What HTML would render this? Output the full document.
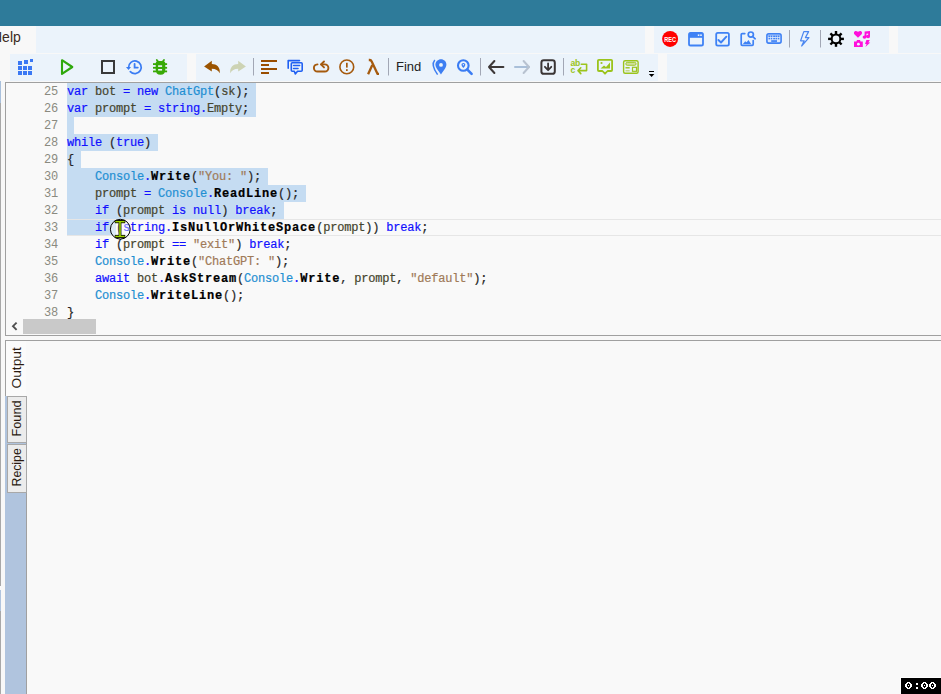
<!DOCTYPE html>
<html><head><meta charset="utf-8">
<style>
*{margin:0;padding:0;box-sizing:border-box}
html,body{width:941px;height:694px;overflow:hidden;background:#f8f8f8;position:relative;font-family:"Liberation Sans",sans-serif}
.a{position:absolute}
.lb{background:#ebf3fb}
#code{position:absolute;left:6px;top:83px;width:935px;height:252px;background:#f9f9f9;overflow:hidden}
.ln{position:absolute;left:0;width:52px;margin-top:1px;text-align:right;font-family:"Liberation Mono",monospace;font-size:12px;color:#8a8a80;letter-spacing:-0.2px;height:17px;line-height:17px}
.cl{position:absolute;left:61px;height:17px;line-height:17px;margin-top:1px;font-family:"Liberation Mono",monospace;font-size:12px;letter-spacing:-0.2px;white-space:pre;color:#45452e;-webkit-text-stroke:0.2px currentColor}
.sel{position:absolute;left:61px;height:17px;background:#c5dcf2}
.k{color:#1010ff}.t{color:#1f8fd2}.s{color:#a07a58}.p{color:#262626}
.b{font-weight:bold;color:#000;letter-spacing:0.8px}
.ui{font-family:"Liberation Sans",sans-serif;font-size:13px;color:#222}
</style></head><body>
<!-- title bar -->
<div class="a" style="left:0;top:0;width:941px;height:26px;background:#2e7b9a"></div>
<!-- menu row groups -->
<div class="a lb" style="left:36px;top:26px;width:609px;height:27px"></div>
<div class="a lb" style="left:654px;top:26px;width:235px;height:27px"></div>
<div class="a lb" style="left:898px;top:26px;width:43px;height:27px"></div>
<div class="a ui" style="left:-8px;top:29px;font-size:14px;color:#3a2a20">Help</div>
<!-- toolbar groups -->
<div class="a lb" style="left:10px;top:54px;width:177px;height:27px"></div>
<div class="a lb" style="left:196px;top:54px;width:462px;height:27px"></div>
<div class="a lb" style="left:667px;top:54px;width:274px;height:27px"></div>
<div class="a ui" style="left:396px;top:59px;font-size:13px">Find</div>


<svg class="a" style="left:0;top:0" width="941" height="90" viewBox="0 0 941 90">
<!-- grid icon -->
<g fill="#3a78f4">
<rect x="18" y="61" width="4" height="4"/><rect x="24" y="60" width="4" height="4"/><rect x="30" y="59" width="3" height="3"/>
<rect x="18" y="66" width="4" height="4"/><rect x="23" y="66" width="4" height="4"/><rect x="28" y="66" width="4" height="4"/>
<rect x="18" y="71" width="4" height="4"/><rect x="23" y="71" width="4" height="4"/><rect x="28" y="71" width="4" height="4"/>
</g>
<!-- play -->
<path d="M62,60.2 L72.3,67 L62,73.8 Z" fill="none" stroke="#2fa80c" stroke-width="2.1" stroke-linejoin="round"/>
<!-- stop -->
<rect x="102" y="61" width="12" height="12" fill="none" stroke="#3a3a3a" stroke-width="2"/>
<!-- history -->
<g fill="none" stroke="#3a7cf3" stroke-width="1.7" stroke-linecap="round">
<path d="M128.6,67.5 A6.3,6.3 0 1 1 130.3,71.6"/>
<path d="M134.6,63.8 V67.6 H137.8" stroke-width="1.8"/>
</g>
<path d="M126,67 L131,67 L128.5,70 Z" fill="#3a7cf3"/>
<!-- bug -->
<g fill="#38a906">
<path d="M155.7,63.6 Q155.7,61.1 158.2,61.1 H162.8 Q165.3,61.1 165.3,63.6 V69.2 Q165.3,74.7 160.5,74.7 Q155.7,74.7 155.7,69.2 Z"/>
<rect x="153" y="63.2" width="3.5" height="1.8"/><rect x="153" y="66.9" width="3.5" height="1.8"/><rect x="153" y="70.5" width="3.5" height="1.8"/>
<rect x="164.5" y="63.2" width="2.6" height="1.8"/><rect x="164.5" y="66.9" width="2.6" height="1.8"/><rect x="164.5" y="70.5" width="2.6" height="1.8"/>
</g>
<g stroke="#38a906" stroke-width="1.8" stroke-linecap="round"><path d="M156.8,59.9 L158,61.6"/><path d="M164,59.9 L162.8,61.6"/></g>
<g fill="#edf4fb"><rect x="158.1" y="65.3" width="4" height="1.6"/><rect x="158.1" y="69" width="4" height="1.6"/></g>
<!-- undo -->
<path d="M204.1,66.4 L211.8,60.7 L211.8,64.1 C216.5,64.1 220.6,67.3 219.7,73.2 C218.2,70.6 215.8,68.8 211.8,68.8 L211.8,71.6 Z" fill="#9b5400"/>
<!-- redo -->
<path d="M245.9,66.4 L238.2,60.7 L238.2,64.1 C233.5,64.1 229.4,67.3 230.3,73.2 C231.8,70.6 234.2,68.8 238.2,68.8 L238.2,71.6 Z" fill="#cdd3b4"/>
<!-- separators -->
<g fill="#a2a7b5"><rect x="253" y="58" width="1" height="17.5"/><rect x="388" y="58" width="1" height="17.5"/><rect x="480" y="58" width="1" height="17.5"/><rect x="563" y="58" width="1" height="17.5"/>
<rect x="789" y="30" width="1" height="17.5"/><rect x="820" y="30" width="1" height="17.5"/></g>
<!-- align -->
<g fill="#994d00"><rect x="261" y="60" width="16" height="2"/><rect x="261" y="64" width="8" height="2"/><rect x="261" y="68" width="16" height="2"/><rect x="261" y="72" width="8" height="2"/></g>
<!-- comments -->
<g fill="none" stroke="#2060f2" stroke-width="1.6" stroke-linecap="round" stroke-linejoin="round">
<path d="M288.2,68.3 V60.6 H299.5"/>
<path d="M292.3,62.8 H301.2 Q302.2,62.8 302.2,63.8 V70.2 Q302.2,71.2 301.2,71.2 H297.5 L295.3,73.9 L294.3,71.2 H292.3 Q291.3,71.2 291.3,70.2 V63.8 Q291.3,62.8 292.3,62.8 Z"/>
<path d="M293.6,65.5 H299.6 M293.6,68.5 H298"/>
</g>
<!-- loop -->
<g fill="none" stroke="#a55a0e" stroke-width="1.9" stroke-linecap="round" stroke-linejoin="round">
<path d="M317.5,64.4 C315.4,64.6 313.9,66.2 313.9,68 C313.9,70 315.5,71.5 317.5,71.5 H324.8 C326.8,71.5 328.4,70 328.4,68 C328.4,66 326.8,64.4 324.8,64.4 H321.2"/>
<path d="M324,61.5 L321,64.4 L324,67.4"/>
</g>
<!-- exclamation -->
<circle cx="346.8" cy="66.9" r="6.9" fill="none" stroke="#a55a0e" stroke-width="1.6"/>
<rect x="346" y="62.8" width="1.7" height="4.8" fill="#a55a0e"/><rect x="346" y="69.2" width="1.7" height="1.8" fill="#a55a0e"/>
<!-- lambda -->
<g fill="none" stroke="#a55a0e" stroke-width="2.3" stroke-linecap="butt" stroke-linejoin="round">
<path d="M368.8,60 H369.8 Q371,60 371.7,61.5 L377.6,73.9 H379"/>
<path d="M372.3,65 L368.1,74.3"/>
</g>
<!-- pin -->
<path d="M441,59.2 C444,59.2 446.4,61.5 446.4,64.6 C446.4,68 443,71.5 441,74.6 C439,71.5 435.4,68 435.4,64.6 C435.6,61.5 438,59.2 441,59.2 Z M441,63 A1.9,1.9 0 1 0 441,66.8 A1.9,1.9 0 1 0 441,63 Z" fill="#3d7ef2" fill-rule="evenodd"/>
<path d="M434.8,60 C431.8,63.5 432.4,67.5 437.6,74.6" fill="none" stroke="#3d7ef2" stroke-width="1.5"/>
<!-- search pin -->
<g fill="none" stroke="#3a7cf3" stroke-linecap="round">
<circle cx="463.3" cy="65.5" r="5.3" stroke-width="2.1"/>
<path d="M467.4,69.6 L471.6,73.8" stroke-width="2.6"/>
</g>
<path d="M463.4,63 C464.5,63 465.3,63.8 465.3,64.8 C465.3,66 464.2,67 463.4,68.1 C462.6,67 461.5,66 461.5,64.8 C461.5,63.8 462.3,63 463.4,63 Z" fill="#3a7cf3"/>
<circle cx="463.4" cy="64.8" r="0.7" fill="#edf4fb"/>
<!-- back -->
<g fill="none" stroke="#3d3838" stroke-width="2" stroke-linecap="round" stroke-linejoin="round">
<path d="M489,67 H503.4 M494.4,61 L489,67 L494.4,73"/>
</g>
<!-- forward -->
<g fill="none" stroke-width="2" stroke-linecap="round" stroke-linejoin="round">
<path d="M515,67 H529" stroke="#a9bfd9"/><path d="M523.6,61 L529,67 L523.6,73" stroke="#b8c2d0"/>
</g>
<!-- download -->
<rect x="541.4" y="60.3" width="13.4" height="13.5" rx="2.4" fill="none" stroke="#3a3535" stroke-width="2"/>
<g fill="none" stroke="#3a3535" stroke-width="1.8" stroke-linecap="round" stroke-linejoin="round"><path d="M548.1,63.4 V70 M544.9,66.8 L548.1,70.2 L551.3,66.8"/></g>
<!-- wrap -->
<text x="570.6" y="65.6" font-family="Liberation Sans" font-weight="bold" font-size="8.6" fill="#9bc41c" letter-spacing="-0.4">ab</text>
<text x="570.6" y="73" font-family="Liberation Sans" font-weight="bold" font-size="8.6" fill="#9bc41c">c</text>
<g fill="none" stroke="#9bc41c" stroke-width="1.6" stroke-linecap="round" stroke-linejoin="round">
<path d="M581.3,64.2 H586.6 V70.6 H578.2 M580.8,67.8 L578,70.6 L580.8,73.6"/>
</g>
<!-- image bubble -->
<path d="M598.9,59.8 H611.1 Q612.1,59.8 612.1,60.8 V70 Q612.1,71 611.1,71 H607.6 L605,73.7 L602.4,71 H598.9 Q597.9,71 597.9,70 V60.8 Q597.9,59.8 598.9,59.8 Z" fill="none" stroke="#9bc41c" stroke-width="1.8" stroke-linejoin="round"/>
<path d="M600.5,68.6 L604,65.6 L606,67 L610,62.4 L610,68.6 Z" fill="#9bc41c"/>
<rect x="600.6" y="62.1" width="1.8" height="1.8" fill="#9bc41c"/>
<!-- layout -->
<rect x="623.6" y="60.7" width="14.5" height="12.6" rx="1.5" fill="none" stroke="#9bc41c" stroke-width="1.4"/>
<rect x="625.8" y="62.4" width="10.3" height="2.9" rx="1.4" fill="#cfe09a" stroke="#9bc41c" stroke-width="0.9"/>
<rect x="625.5" y="67.1" width="4.2" height="1.4" fill="#9bc41c"/>
<rect x="625.5" y="70" width="4.2" height="1.5" fill="#c5d88a"/>
<rect x="632.5" y="67.3" width="4" height="4" fill="none" stroke="#9bc41c" stroke-width="1.2"/>
<!-- overflow -->
<rect x="649" y="71" width="5" height="1" fill="#000"/>
<path d="M648.8,74 L654.4,74 L651.6,77 Z" fill="#000"/>
<!-- REC -->
<circle cx="670.1" cy="38.9" r="8" fill="#ff0000"/>
<text x="670.1" y="42" text-anchor="middle" font-family="Liberation Sans" font-weight="bold" font-size="8" fill="#fff" transform="translate(670.1 0) scale(0.7 1) translate(-670.1 0)">REC</text>
<!-- window -->
<rect x="689" y="32.9" width="14" height="12.6" rx="1.6" fill="none" stroke="#3f82f5" stroke-width="1.8"/>
<rect x="689" y="32.9" width="14" height="4.9" fill="#3f82f5"/>
<rect x="697.8" y="34.4" width="1.6" height="1.6" fill="#edf4fb"/><rect x="700.2" y="34.4" width="1.6" height="1.6" fill="#edf4fb"/>
<!-- checkbox -->
<rect x="716.2" y="32.9" width="12.7" height="12.8" rx="1.6" fill="none" stroke="#3f82f5" stroke-width="1.8"/>
<path d="M718.4,40 L721,42.5 L726.4,36.7" fill="none" stroke="#3f82f5" stroke-width="1.9" stroke-linecap="round" stroke-linejoin="round"/>
<!-- image search -->
<g fill="none" stroke="#3f82f5" stroke-width="1.7" stroke-linecap="round" stroke-linejoin="round">
<path d="M744.8,33.6 H742.2 Q741.2,33.6 741.2,34.6 V44.3 Q741.2,45.3 742.2,45.3 H752.2 Q753.2,45.3 753.2,44.3 V40.6"/>
<circle cx="750.8" cy="34.6" r="2.6"/>
<path d="M752.8,36.6 L755.2,38.8"/>
</g>
<path d="M742.9,43.9 L745.2,41.2 L746.6,42.3 L748.5,39.9 L751.1,43.9 Z" fill="#3f82f5"/>
<!-- keyboard -->
<rect x="766.9" y="33.9" width="14.2" height="9.2" rx="1.8" fill="#dce8fb" stroke="#3f82f5" stroke-width="1.6"/>
<rect x="768" y="34.8" width="12" height="1.8" fill="#a9c5f7"/>
<g fill="#3f82f5"><rect x="768.55" y="35.55" width="1.5" height="1.5"/><rect x="770.75" y="35.55" width="1.5" height="1.5"/><rect x="775.65" y="35.55" width="1.5" height="1.5"/><rect x="777.85" y="35.55" width="1.5" height="1.5"/><rect x="768.55" y="37.85" width="1.5" height="1.5"/><rect x="770.75" y="37.85" width="1.5" height="1.5"/><rect x="775.65" y="37.85" width="1.5" height="1.5"/><rect x="777.85" y="37.85" width="1.5" height="1.5"/><rect x="773.2" y="35.6" width="2" height="1.4"/><rect x="773.2" y="37.9" width="2" height="1.4"/><rect x="771.2" y="40.2" width="5.8" height="1.7"/></g>
<!-- lightning -->
<path d="M808.6,31.6 H803.8 L800.6,40.8 H804.2 L801.6,46 L809,37.6 H805.4 Z" fill="none" stroke="#4a86f0" stroke-width="1.2" stroke-linejoin="round"/>
<!-- gear -->
<g transform="translate(836 38.9)">
<g fill="#000">
<rect x="-1.2" y="-7.9" width="2.4" height="15.8"/>
<rect x="-1.2" y="-7.9" width="2.4" height="15.8" transform="rotate(45)"/>
<rect x="-1.2" y="-7.9" width="2.4" height="15.8" transform="rotate(90)"/>
<rect x="-1.2" y="-7.9" width="2.4" height="15.8" transform="rotate(135)"/>
</g>
<circle r="4.3" fill="none" stroke="#000" stroke-width="2.1"/>
<circle r="3.3" fill="#edf4fb"/>
</g>
<!-- magenta -->
<g fill="#ff10dc">
<path d="M858,37.8 L854.6,34.4 C853.4,33.2 853.8,30.9 856,30.9 C857,30.9 858,31.8 858,31.8 C858,31.8 859,30.9 860,30.9 C862.2,30.9 862.6,33.2 861.4,34.4 Z"/>
<path d="M864.6,31.6 L870,30.9 V36.4 A1.9,1.7 0 1 1 868.2,34.8 V33.4 L866.4,33.7 V37 A1.9,1.7 0 1 1 864.6,35.4 Z"/>
<path d="M854,41.6 H856.4 L857,40 H860 L860.6,41.6 H862.8 V46.9 H854 Z"/>
<path d="M866.4,40 H869.8 L868.4,42.6 H870.2 L865.4,47 L866.6,44 H865 Z"/>
</g>
<circle cx="858.4" cy="44.2" r="1.4" fill="#edf4fb"/>
</svg>

<!-- left edge line -->
<div class="a" style="left:0;top:81px;width:1px;height:613px;background:#a8a8a8"></div>
<div class="a" style="left:0;top:81px;width:1px;height:22px;background:#a9c0dc"></div>

<!-- editor -->
<div class="a" style="left:5px;top:82px;width:940px;height:254px;border:1px solid #a0a0a0;border-right:none"></div>
<div id="code">
 <div class="sel" style="top:0;width:189px"></div>
 <div class="sel" style="top:17px;width:189px"></div>
 <div class="sel" style="top:34px;width:7px"></div>
 <div class="sel" style="top:51px;width:91px"></div>
 <div class="sel" style="top:68px;width:14px"></div>
 <div class="sel" style="top:85px;width:201px"></div>
 <div class="sel" style="top:102px;width:239px"></div>
 <div class="sel" style="top:119px;width:217px"></div>
 <div class="a" style="left:61px;top:136px;width:874px;height:17px;border-top:1px solid #e6e6e6;border-bottom:1px solid #e6e6e6"></div>
 <div class="sel" style="top:137px;width:49px;height:15px"></div>

 <div class="ln" style="top:0">25</div>
 <div class="ln" style="top:17px">26</div>
 <div class="ln" style="top:34px">27</div>
 <div class="ln" style="top:51px">28</div>
 <div class="ln" style="top:68px">29</div>
 <div class="ln" style="top:85px">30</div>
 <div class="ln" style="top:102px">31</div>
 <div class="ln" style="top:119px">32</div>
 <div class="ln" style="top:136px">33</div>
 <div class="ln" style="top:153px">34</div>
 <div class="ln" style="top:170px">35</div>
 <div class="ln" style="top:187px">36</div>
 <div class="ln" style="top:204px">37</div>
 <div class="ln" style="top:221px">38</div>

 <div class="cl" style="top:0"><span class="k">var</span> bot <span class="k">=</span> <span class="k">new</span> <span class="t">ChatGpt</span><span class="p">(</span>sk<span class="p">);</span></div>
 <div class="cl" style="top:17px"><span class="k">var</span> prompt <span class="k">=</span> <span class="k">string</span><span class="k">.</span>Empty<span class="p">;</span></div>
 <div class="cl" style="top:51px"><span class="k">while</span> <span class="p">(</span><span class="k">true</span><span class="p">)</span></div>
 <div class="cl" style="top:68px"><span class="p">{</span></div>
 <div class="cl" style="top:85px">    <span class="t">Console</span><span class="k">.</span><span class="b">Write</span><span class="p">(</span><span class="s">"You: "</span><span class="p">);</span></div>
 <div class="cl" style="top:102px">    prompt <span class="k">=</span> <span class="t">Console</span><span class="k">.</span><span class="b">ReadLine</span><span class="p">();</span></div>
 <div class="cl" style="top:119px">    <span class="k">if</span> <span class="p">(</span>prompt <span class="k">is</span> <span class="k">null</span><span class="p">)</span> <span class="k">break</span><span class="p">;</span></div>
 <div class="cl" style="top:136px">    <span class="k">if</span> <span class="p">(</span><span class="k">string</span><span class="k">.</span><span class="b">IsNullOrWhiteSpace</span><span class="p">(</span>prompt<span class="p">))</span> <span class="k">break</span><span class="p">;</span></div>
 <div class="cl" style="top:153px">    <span class="k">if</span> <span class="p">(</span>prompt <span class="k">==</span> <span class="s">"exit"</span><span class="p">)</span> <span class="k">break</span><span class="p">;</span></div>
 <div class="cl" style="top:170px">    <span class="t">Console</span><span class="k">.</span><span class="b">Write</span><span class="p">(</span><span class="s">"ChatGPT: "</span><span class="p">);</span></div>
 <div class="cl" style="top:187px">    <span class="k">await</span> bot<span class="k">.</span><span class="b">AskStream</span><span class="p">(</span><span class="t">Console</span><span class="k">.</span><span class="b">Write</span><span class="p">,</span> prompt<span class="p">,</span> <span class="s">"default"</span><span class="p">);</span></div>
 <div class="cl" style="top:204px">    <span class="t">Console</span><span class="k">.</span><span class="b">WriteLine</span><span class="p">();</span></div>
 <div class="cl" style="top:221px"><span class="p">}</span></div>
 <!-- h scrollbar -->
 <svg class="a" style="left:0;top:236px" width="20" height="16"><path d="M10.6,3.6 L7,7.2 L10.6,10.8" fill="none" stroke="#505050" stroke-width="1.9"/></svg>
 <div class="a" style="left:17px;top:236px;width:73px;height:15px;background:#c9c9c9"></div>
</div>

<svg class="a" style="left:0;top:0" width="941" height="300">
<circle cx="120.3" cy="229.2" r="9.9" fill="rgba(255,255,255,0.4)" stroke="#000" stroke-width="1"/>
<g fill="#000"><rect x="114.8" y="220" width="10.4" height="3.2"/><rect x="114.8" y="234.9" width="10.4" height="3.2"/><rect x="118.6" y="222" width="2.8" height="14"/></g>
<g fill="#9fd400"><rect x="115.3" y="220.9" width="9.4" height="1.5"/><rect x="115.3" y="235.7" width="9.4" height="1.5"/><rect x="119.2" y="222" width="1.6" height="14"/></g>
</svg>
<!-- output panel -->
<div class="a" style="left:5px;top:340px;width:940px;height:360px;border:1px solid #a0a0a0;border-right:none;background:#f9f9f9"></div>
<div class="a" style="left:5px;top:396px;width:21px;height:298px;background:#b0c4de"></div>
<div class="a" style="left:26px;top:396px;width:1px;height:298px;background:#a0a0a0"></div>


<!-- tabs -->
<div class="a" style="left:0;top:586px;width:1px;height:25px;background:#fafafa"></div><div class="a" style="left:0;top:590px;width:1px;height:21px;background:#b0c4de"></div>
<div class="a" style="left:7px;top:396px;width:20px;height:47px;background:#ececec;border:1px solid #a8a8a8"></div>
<div class="a" style="left:7px;top:444px;width:20px;height:49px;background:#ececec;border:1px solid #a8a8a8"></div>
<div class="a" style="left:5px;top:340px;width:1px;height:56px;background:#a0a0a0"></div>
<div class="a" style="left:6px;top:341px;width:20px;height:55px;background:#fbfbfb"></div>
<div class="a ui" style="left:0;top:0;width:60px;height:16px;line-height:16px;font-size:13px;color:#2a1a10;white-space:nowrap;transform-origin:0 0;transform:translate(9px,388.5px) rotate(-90deg) scaleX(1.056)">Output</div>
<div class="a ui" style="left:0;top:0;width:60px;height:16px;line-height:16px;font-size:13px;color:#2a1a10;white-space:nowrap;transform-origin:0 0;transform:translate(9px,436.5px) rotate(-90deg) scaleX(0.978)">Found</div>
<div class="a ui" style="left:0;top:0;width:60px;height:16px;line-height:16px;font-size:13px;color:#2a1a10;white-space:nowrap;transform-origin:0 0;transform:translate(9px,486.5px) rotate(-90deg) scaleX(0.946)">Recipe</div>

<!-- timer -->
<div class="a" style="left:900px;top:677px;width:41px;height:17px;background:#fff"></div>
<div class="a" style="left:901px;top:678px;width:40px;height:16px;background:#000"></div>
<svg class="a" style="left:0;top:0" width="941" height="694" shape-rendering="crispEdges"><g fill="#fff"><rect x="907" y="682" width="3" height="1"/><rect x="906" y="683" width="2" height="1"/><rect x="909" y="683" width="2" height="1"/><rect x="905" y="684" width="2" height="1"/><rect x="910" y="684" width="2" height="1"/><rect x="905" y="685" width="2" height="1"/><rect x="908" y="685" width="1" height="1"/><rect x="910" y="685" width="2" height="1"/><rect x="905" y="686" width="2" height="1"/><rect x="910" y="686" width="2" height="1"/><rect x="906" y="687" width="2" height="1"/><rect x="909" y="687" width="2" height="1"/><rect x="907" y="688" width="3" height="1"/><rect x="923" y="682" width="3" height="1"/><rect x="922" y="683" width="2" height="1"/><rect x="925" y="683" width="2" height="1"/><rect x="921" y="684" width="2" height="1"/><rect x="926" y="684" width="2" height="1"/><rect x="921" y="685" width="2" height="1"/><rect x="924" y="685" width="1" height="1"/><rect x="926" y="685" width="2" height="1"/><rect x="921" y="686" width="2" height="1"/><rect x="926" y="686" width="2" height="1"/><rect x="922" y="687" width="2" height="1"/><rect x="925" y="687" width="2" height="1"/><rect x="923" y="688" width="3" height="1"/><rect x="931" y="682" width="3" height="1"/><rect x="930" y="683" width="2" height="1"/><rect x="933" y="683" width="2" height="1"/><rect x="929" y="684" width="2" height="1"/><rect x="934" y="684" width="2" height="1"/><rect x="929" y="685" width="2" height="1"/><rect x="932" y="685" width="1" height="1"/><rect x="934" y="685" width="2" height="1"/><rect x="929" y="686" width="2" height="1"/><rect x="934" y="686" width="2" height="1"/><rect x="930" y="687" width="2" height="1"/><rect x="933" y="687" width="2" height="1"/><rect x="931" y="688" width="3" height="1"/><rect x="916" y="683" width="2" height="2"/><rect x="916" y="687" width="2" height="2"/></g></svg>
</body></html>
